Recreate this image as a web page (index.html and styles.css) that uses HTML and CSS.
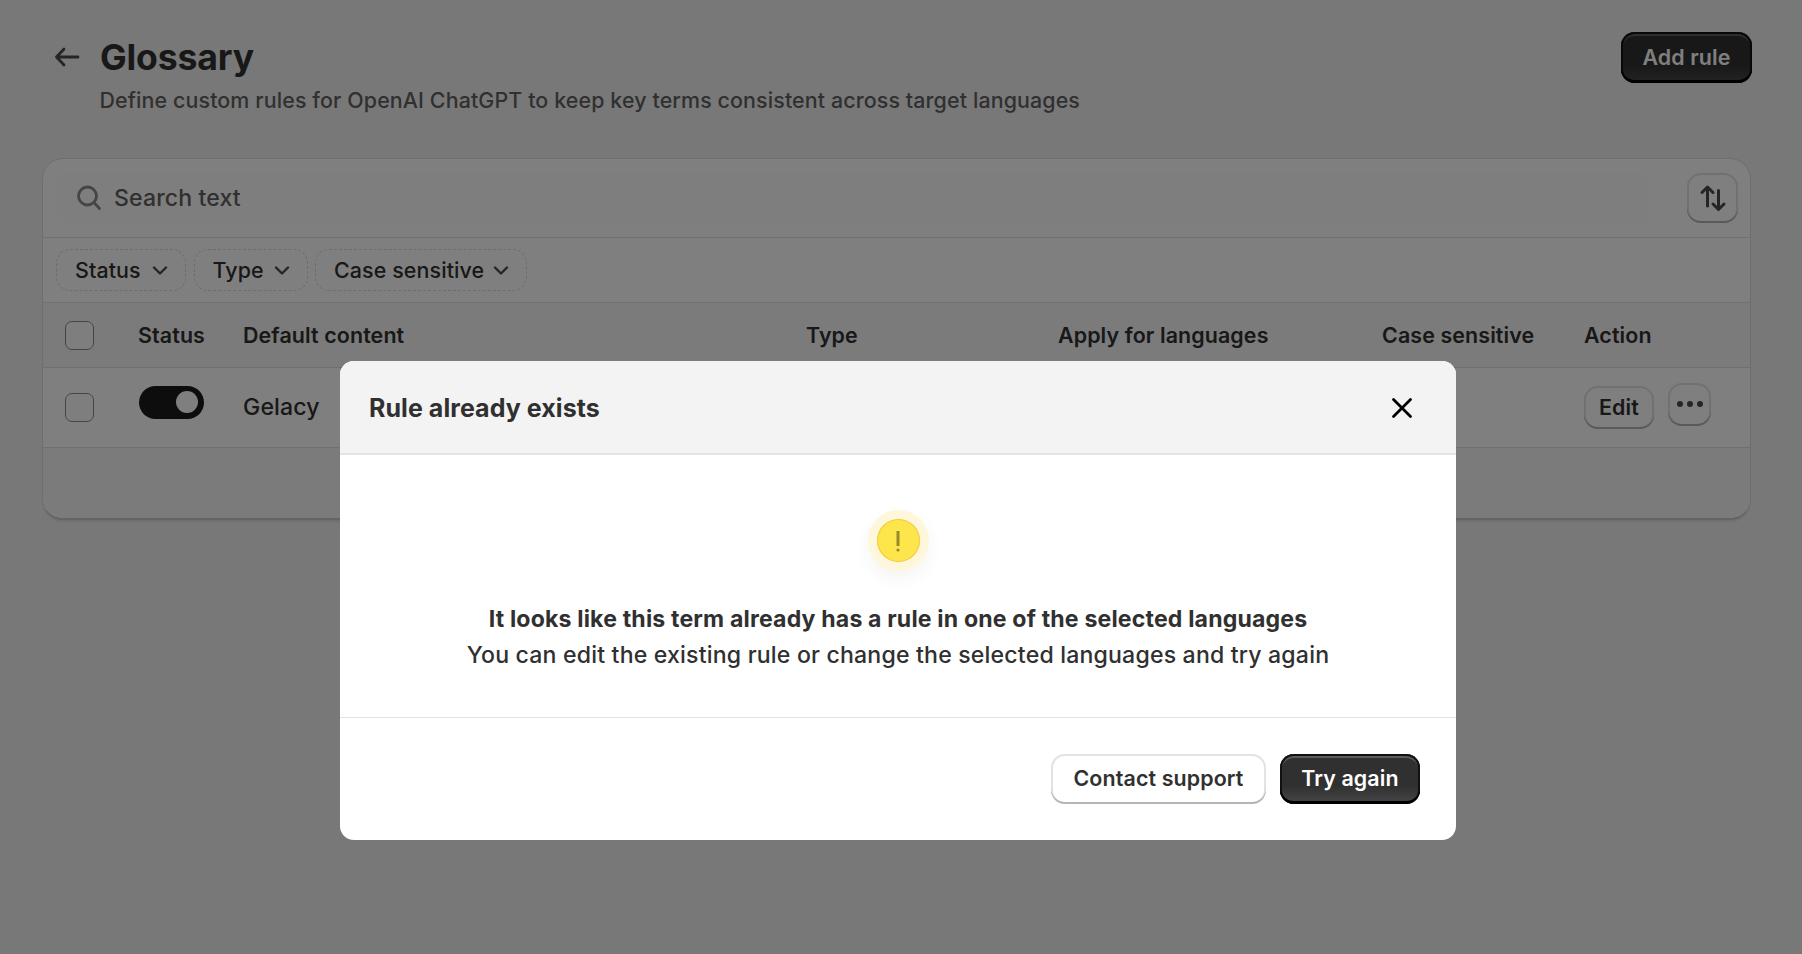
FILE: index.html
```
<!DOCTYPE html>
<html lang="en">
<head>
    <meta charset="UTF-8">
    <meta name="viewport" content="width=device-width, initial-scale=1.0">
    <title>Glossary</title>
    <link rel="stylesheet" href="styles.css">
</head>
<body>
    <main class="page">
        <header class="page-header">
            <svg class="back-icon" width="26" height="22" viewBox="0 0 26 22"><path d="M24 11H2.500M10 3L2.500 11L10 19"/></svg>
            <div class="page-heading">
                <h1>Glossary</h1>
                <p>Define custom rules for OpenAI ChatGPT to keep key terms consistent across target languages</p>
            </div>
            <button class="btn btn-primary btn-add">Add rule</button>
        </header>

        <section class="card">
            <div class="search-row">
                <div class="search-field">
                    <svg class="search-icon" width="26" height="26" viewBox="0 0 26 26"><circle cx="11.500" cy="11" r="9"/><path d="M18 17.500L23.500 23.500"/></svg>
                    <span>Search text</span>
                </div>
                <button class="btn btn-sort">
                    <svg width="30" height="30" viewBox="0 0 30 30"><path d="M9.500 23V4.500M4 9.500L9.500 4L15 9.500M20.500 7.500V26M15 21L20.500 26.500L26 21"/></svg>
                </button>
            </div>

            <div class="filters">
                <button class="filter filter-status">Status <svg class="chevron" width="16" height="10" viewBox="0 0 16 10"><path d="M2 1.500L8 7.500L14 1.500"/></svg></button>
                <button class="filter filter-type">Type <svg class="chevron" width="16" height="10" viewBox="0 0 16 10"><path d="M2 1.500L8 7.500L14 1.500"/></svg></button>
                <button class="filter filter-case">Case sensitive <svg class="chevron" width="16" height="10" viewBox="0 0 16 10"><path d="M2 1.500L8 7.500L14 1.500"/></svg></button>
            </div>

            <div class="row row-head">
                <span class="checkbox"></span>
                <span>Status</span>
                <span>Default content</span>
                <span>Type</span>
                <span>Apply for languages</span>
                <span>Case sensitive</span>
                <span>Action</span>
            </div>
            <div class="row row-item">
                <span class="checkbox"></span>
                <span class="toggle"><span class="knob"></span></span>
                <span class="term">Gelacy</span>
                <span></span>
                <span></span>
                <span></span>
                <div class="actions">
                    <button class="btn btn-edit">Edit</button>
                    <button class="btn btn-more">
                        <svg width="28" height="8" viewBox="0 0 28 8"><circle cx="4" cy="4" r="3"/><circle cx="14" cy="4" r="3"/><circle cx="24" cy="4" r="3"/></svg>
                    </button>
                </div>
            </div>
            <div class="card-footer"></div>
        </section>
    </main>

    <div class="overlay">
        <div class="modal">
            <div class="modal-header">
                <h2>Rule already exists</h2>
                <svg class="close-icon" width="22" height="22" viewBox="0 0 22 22"><path d="M2.500 2.500L19.500 19.500M19.500 2.500L2.500 19.500"/></svg>
            </div>
            <div class="modal-body">
                <div class="warning">
                    <svg width="6" height="22" viewBox="0 0 6 22"><path d="M3 1V16"/><circle cx="3" cy="20" r="1.600"/></svg>
                </div>
                <h3>It looks like this term already has a rule in one of the selected languages</h3>
                <p>You can edit the existing rule or change the selected languages and try again</p>
            </div>
            <div class="modal-footer">
                <button class="btn btn-contact">Contact support</button>
                <button class="btn btn-primary btn-try">Try again</button>
            </div>
        </div>
    </div>
</body>
</html>
```
FILE: styles.css
```
* {
    box-sizing: border-box;
}
body {
    margin: 0;
    height: 954px;
    overflow: hidden;
    background: #f1f1f1;
    color: #303030;
    font-family: Inter, "Liberation Sans", sans-serif;
    font-size: 21.4px;
    font-weight: 450;
    letter-spacing: 0.12px;
}
h1, h2, h3, p {
    margin: 0;
}
button {
    font-family: inherit;
    font-size: inherit;
    letter-spacing: inherit;
    color: inherit;
    padding: 0;
}
svg {
    display: block;
    flex: none;
    fill: none;
    stroke: #4a4a4a;
    stroke-width: 2.8;
    stroke-linecap: round;
    stroke-linejoin: round;
}

/* Page header */
.page {
    padding: 32px 51px 0 42px;
}
.page-header {
    display: flex;
    align-items: flex-start;
    height: 126px;
}
.back-icon {
    margin: 14px 20px 0 12px;
}
.page-heading {
    flex: 1;
}
h1 {
    padding-top: 1px;
    font-size: 35.6px;
    line-height: 50px;
    font-weight: 700;
    letter-spacing: -0.15px;
}
.page-heading p {
    margin: -1px 0 0 -0.5px;
    line-height: 36px;
    color: #616161;
}

/* Buttons */
.btn {
    display: flex;
    align-items: center;
    justify-content: center;
    height: 50px;
    padding-bottom: 2px;
    border: 0;
    border-radius: 14px;
    background: #fff;
    font-weight: 600;
    box-shadow: inset 0 -2px 0 #b5b5b5, inset 0 0 0 2px #e3e3e3;
}
.btn-primary {
    background: linear-gradient(#303030 63%, #474747);
    color: #fff;
    box-shadow: inset 0 -3px 0 #000, inset 0 0 0 2px #111, inset 0 3px 0 1px #5c5c5c;
}
.btn-add {
    width: 131px;
    height: 51px;
    margin: 0 -1px 0 0;
}
.btn-sort {
    width: 51px;
    padding-bottom: 1px;
}
.btn-sort svg {
    stroke-width: 3;
}
.btn-edit {
    width: 70px;
    height: 43px;
    padding-bottom: 1px;
}
.btn-more {
    width: 43px;
    height: 43px;
    margin-top: -3px;
}
.btn-more svg {
    fill: #4a4a4a;
    stroke: none;
}
.btn-contact {
    width: 215px;
}
.btn-try {
    width: 140px;
}

/* Card */
.card {
    border-radius: 21px;
    overflow: hidden;
    height: 362px;
    background: #fff;
    box-shadow: 0 2px 1px rgba(26, 26, 26, 0.08);
    border: 1px solid #dcdcdc;
    border-bottom: 2px solid #c8c8c8;
}
.search-row {
    display: flex;
    align-items: center;
    justify-content: space-between;
    height: 79px;
    padding: 0 12px 0 13px;
    border-bottom: 1px solid #e3e3e3;
}
.search-field {
    display: flex;
    align-items: center;
    gap: 12px;
    width: 1594px;
    height: 50px;
    padding-left: 20px;
    border-radius: 14px;
    background: #fdfdfd;
    color: #616161;
    font-size: 23.1px;
}
.search-icon {
    stroke: #8a8a8a;
}
.filters {
    display: flex;
    gap: 7.5px;
    height: 65px;
    padding: 11px 13px;
    border-bottom: 1px solid #e3e3e3;
}
.filter {
    display: flex;
    align-items: center;
    justify-content: space-between;
    height: 42px;
    padding: 0 17px 0 18px;
    border: 1px dashed #dadada;
    border-radius: 14px;
    background: none;
    font-weight: 500;
}
.filter-status {
    width: 130px;
}
.filter-type {
    width: 114px;
}
.filter-case {
    width: 212px;
}
.chevron {
    margin-top: 1px;
    stroke-width: 2.4;
}

/* Table */
.row {
    display: grid;
    grid-template-columns: 73px 105px 563px 252px 324px 202px 1fr;
    align-items: center;
    padding-left: 22px;
    border-bottom: 1px solid #e0e0e0;
}
.row-head {
    height: 65px;
    background: #f7f7f7;
    font-weight: 600;
}
.row-item {
    height: 80px;
}
.checkbox {
    width: 29px;
    height: 29px;
    border: 1px solid #8a8a8a;
    border-radius: 7px;
    background: #fdfdfd;
}
.toggle {
    display: flex;
    align-items: center;
    justify-content: flex-end;
    width: 65px;
    height: 33px;
    margin: 0 0 11px 1px;
    padding-right: 6px;
    border-radius: 17px;
    background: #1a1a1a;
}
.knob {
    width: 22px;
    height: 22px;
    border-radius: 50%;
    background: #fff;
}
.term {
    padding-bottom: 1px;
    font-size: 23.1px;
}
.actions {
    display: flex;
    gap: 14px;
}
.card-footer {
    height: 72px;
    background: #f7f7f7;
}

/* Modal */
.overlay {
    position: fixed;
    inset: 0;
    padding: 361px 0 0 340px;
    background: rgba(0, 0, 0, 0.5);
}
.modal {
    width: 1116px;
    height: 479px;
    border-radius: 14px;
    overflow: hidden;
    background: #fff;
}
.modal-header {
    display: flex;
    align-items: center;
    justify-content: space-between;
    height: 94px;
    padding: 2px 43px 0 29px;
    background: #f3f3f3;
    border-bottom: 2px solid #e3e3e3;
}
.modal-header h2 {
    font-size: 25px;
    font-weight: 700;
    letter-spacing: 0.06px;
}
.close-icon {
    stroke: #000;
}
.modal-body {
    display: flex;
    flex-direction: column;
    align-items: center;
    height: 263px;
    padding-top: 64px;
    border-bottom: 1px solid #e3e3e3;
    font-size: 23.1px;
    line-height: 36px;
}
.modal-body p {
    letter-spacing: 0.18px;
}
.warning {
    display: flex;
    align-items: center;
    justify-content: center;
    width: 43px;
    height: 43px;
    margin: 0 0 39px;
    border-radius: 50%;
    background: #fce64b;
    box-shadow: inset 0 0 0 1px #f8c845, 0 0 0 9px #fff7dc, 0 8px 20px 6px rgba(90, 50, 20, 0.07);
}
.warning svg {
    stroke: #998a2c;
    stroke-width: 3;
    stroke-linecap: butt;
}
.warning circle {
    fill: #998a2c;
    stroke: none;
}
.modal-body h3 {
    font-size: inherit;
    font-weight: 700;
    letter-spacing: 0.16px;
}
.modal-footer {
    display: flex;
    justify-content: flex-end;
    gap: 14px;
    padding: 36px 36px 0 0;
}
```
